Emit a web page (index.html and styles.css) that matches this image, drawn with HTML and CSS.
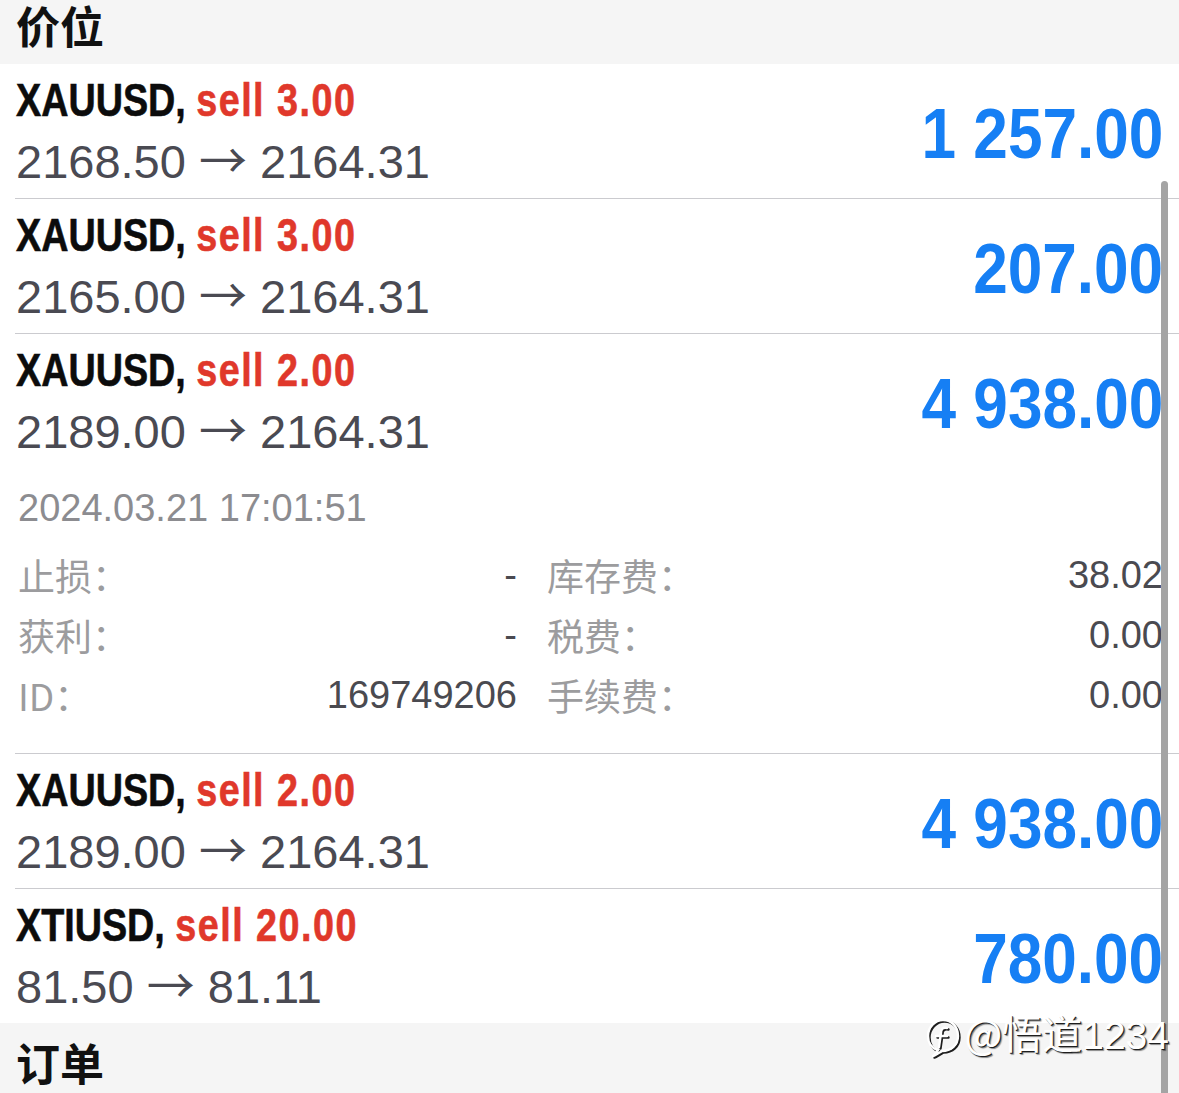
FILE: index.html
```html
<!DOCTYPE html>
<html lang="zh-CN">
<head>
  <meta charset="UTF-8">
  <meta name="viewport" content="width=device-width, initial-scale=1.0">
  <title>价位</title>
  <link rel="stylesheet" href="styles.css">
</head>
<body>
  <div class="screen">
    <div class="section-head">价位</div>

    <ul class="positions">
      <li class="position">
        <div class="position-main">
          <div class="position-info">
            <div class="position-title">XAUUSD, <span class="side">sell 3.00</span></div>
            <div class="position-price">2168.50 <span class="arrow">→</span> 2164.31</div>
          </div>
          <div class="position-profit">1 257.00</div>
        </div>
      </li>

      <li class="position">
        <div class="position-main">
          <div class="position-info">
            <div class="position-title">XAUUSD, <span class="side">sell 3.00</span></div>
            <div class="position-price">2165.00 <span class="arrow">→</span> 2164.31</div>
          </div>
          <div class="position-profit">207.00</div>
        </div>
      </li>

      <li class="position">
        <div class="position-main">
          <div class="position-info">
            <div class="position-title">XAUUSD, <span class="side">sell 2.00</span></div>
            <div class="position-price">2189.00 <span class="arrow">→</span> 2164.31</div>
          </div>
          <div class="position-profit">4 938.00</div>
        </div>
        <div class="position-details">
          <div class="details-time">2024.03.21 17:01:51</div>
          <div class="details-grid">
            <div class="detail"><span class="detail-label">止损：</span><span class="detail-value">-</span></div>
            <div class="detail"><span class="detail-label">库存费：</span><span class="detail-value">38.02</span></div>
            <div class="detail"><span class="detail-label">获利：</span><span class="detail-value">-</span></div>
            <div class="detail"><span class="detail-label">税费：</span><span class="detail-value">0.00</span></div>
            <div class="detail"><span class="detail-label">ID：</span><span class="detail-value">169749206</span></div>
            <div class="detail"><span class="detail-label">手续费：</span><span class="detail-value">0.00</span></div>
          </div>
        </div>
      </li>

      <li class="position">
        <div class="position-main">
          <div class="position-info">
            <div class="position-title">XAUUSD, <span class="side">sell 2.00</span></div>
            <div class="position-price">2189.00 <span class="arrow">→</span> 2164.31</div>
          </div>
          <div class="position-profit">4 938.00</div>
        </div>
      </li>

      <li class="position">
        <div class="position-main">
          <div class="position-info">
            <div class="position-title">XTIUSD, <span class="side">sell 20.00</span></div>
            <div class="position-price">81.50 <span class="arrow">→</span> 81.11</div>
          </div>
          <div class="position-profit">780.00</div>
        </div>
      </li>
    </ul>

    <div class="section-head">订单</div>

    <div class="scrollbar"></div>

    <div class="watermark">
      <svg class="watermark-logo" width="36" height="42" viewBox="0 0 36 42">
        <g fill="none" stroke-linecap="round" stroke-linejoin="round">
          <g stroke="#1e1e1e" stroke-width="2.4" transform="translate(1.5 1.5)">
            <path d="M12 33 C5 31 2 25 2 19 C2 10 9 3 17 3 C26 3 32 10 32 19 C32 28 25 34 16 34 C13 36 10 38 7 39 C9 37 11 35 12 33"/>
            <path d="M21 11 C17 10 15 12 15 16 L13 30 M10 19 L21 19"/>
          </g>
          <g stroke="#fff" stroke-width="2.4">
            <path d="M12 33 C5 31 2 25 2 19 C2 10 9 3 17 3 C26 3 32 10 32 19 C32 28 25 34 16 34 C13 36 10 38 7 39 C9 37 11 35 12 33"/>
            <path d="M21 11 C17 10 15 12 15 16 L13 30 M10 19 L21 19"/>
          </g>
        </g>
      </svg>
      <span class="watermark-text">@悟道<span class="watermark-num">1234</span></span>
    </div>
  </div>
</body>
</html>
```

FILE: styles.css
```css
* {
  box-sizing: border-box;
  margin: 0;
  padding: 0;
}

html, body {
  background: #fff;
  overflow: hidden;
}

body {
  font-family: "Liberation Sans", "Noto Sans CJK SC", sans-serif;
  color: #4a4a50;
}

.screen {
  position: relative;
  width: 1179px;
  height: 1107px;
  margin-top: -14px;
  overflow: hidden;
}

.section-head {
  background: #f5f5f5;
  padding: 17px 16px;
  font-family: "Noto Sans CJK SC", sans-serif;
  font-weight: 700;
  font-size: 44px;
  line-height: 44px;
  color: #111;
}

.positions {
  list-style: none;
}

.position {
  margin-left: 15px;
  padding: 10px 16px 10px 1px;
  border-bottom: 1px solid #cbcbcf;
}

.position:last-child {
  border-bottom: none;
}

.position-main {
  display: flex;
  align-items: center;
  justify-content: space-between;
}

/* condensed bold: no narrow face installed, so squeeze Liberation Sans Bold */
.position-title {
  display: inline-block;
  height: 52px;
  transform: scaleX(0.82);
  transform-origin: left center;
  font-weight: 700;
  font-size: 46px;
  line-height: 52px;
  color: #0c0c0c;
  white-space: nowrap;
  -webkit-text-stroke: 0.6px currentColor;
}

.side {
  color: #e0382b;
  letter-spacing: 1.8px;
}

.position-price {
  height: 52px;
  margin-top: 10px;
  font-size: 47px;
  line-height: 52px;
  color: #4a4a52;
  white-space: nowrap;
}

.arrow {
  font-family: "Noto Sans CJK SC", sans-serif;
  font-size: 48px;
  line-height: 0;
}

.position-profit {
  margin-top: 4px;
  transform: scaleX(0.875);
  transform-origin: right center;
  font-weight: 700;
  font-size: 71px;
  color: #167ff4;
  white-space: nowrap;
}

.position-details {
  padding: 30px 0 18px 2px;
}

.details-time {
  font-size: 38px;
  line-height: 40px;
  color: #8c8c90;
}

.details-grid {
  display: grid;
  grid-template-columns: 499px 1fr;
  column-gap: 30px;
  margin-top: 17px;
}

.detail {
  display: flex;
  align-items: center;
  justify-content: space-between;
  height: 60px;
  font-size: 38px;
}

.detail-label {
  font-family: "Noto Sans CJK SC", sans-serif;
  font-size: 37px;
  color: #9c9c9e;
}

.detail-value {
  color: #4a4a50;
}

.scrollbar {
  position: absolute;
  left: 1161px;
  top: 195px;
  bottom: 0;
  width: 7px;
  border-radius: 4px 4px 0 0;
  background: #a4a4a4;
}

.watermark {
  position: absolute;
  top: 1022px;
  right: 10px;
  display: flex;
  align-items: center;
  gap: 2px;
}

.watermark-logo {
  margin-top: 8px;
}

.watermark-text {
  font-family: "Noto Sans CJK SC", sans-serif;
  font-weight: 400;
  font-size: 40px;
  line-height: 48px;
  color: #fff;
  text-shadow: 1px 1px 0 #1e1e1e, 2px 2px 1px rgba(0, 0, 0, 0.45);
}

.watermark-num {
  font-family: "Liberation Sans", sans-serif;
  font-size: 39px;
}
```
